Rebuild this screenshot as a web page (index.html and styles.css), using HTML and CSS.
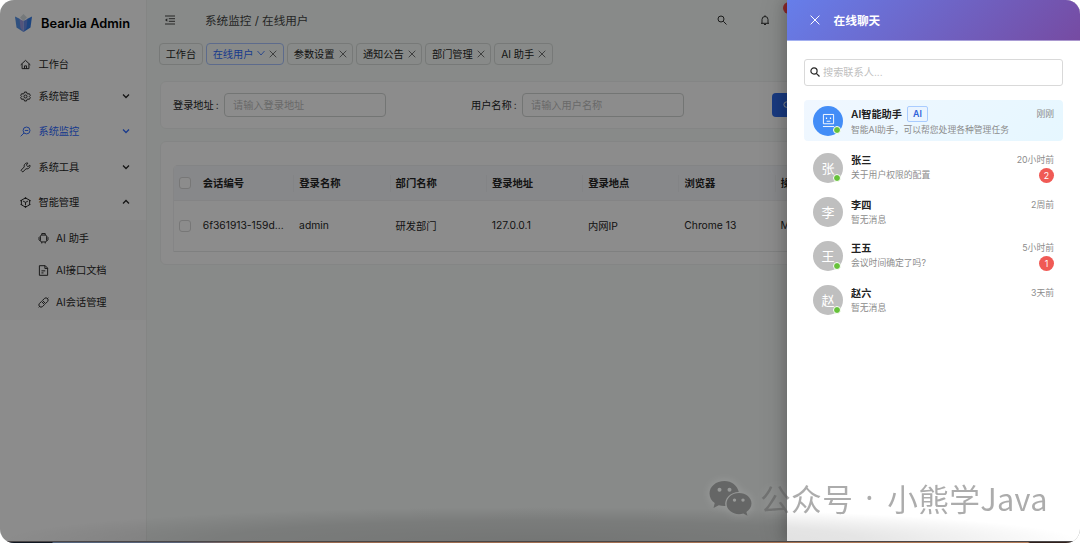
FILE: index.html
```
<!DOCTYPE html>
<html lang="zh-CN">
<head>
    <meta charset="UTF-8">
    <meta name="viewport" content="width=device-width, initial-scale=1.0">
    <title>BearJia Admin</title>
    <link rel="stylesheet" href="styles.css">
</head>
<body>

    <div class="window">
        <div class="app">
            <aside class="sidebar">
                <div class="brand">
                    <svg class="logo" viewBox="0 0 17 18">
                        <path d="M8.5 0L12 3.5 8.5 7 5 3.5z" fill="#d5dde0"/>
                        <path d="M0 2.5L5 5l3.5 13L1.5 13.500z" fill="#5693e8"/>
                        <path d="M17 2.500L12 5 8.500 18l7-4.500z" fill="#347ce8"/>
                        <path d="M4.500 5L8.500 7v11L5.500 14z" fill="#9a9ae0"/>
                        <path d="M12.500 5L8.500 7v11l3-4z" fill="#678be8"/>
                    </svg>
                    <span>BearJia Admin</span>
                </div>

                <div class="menu">
                    <div class="item first">
                        <svg class="icon" viewBox="0 0 16 16"><path d="M1 8.500L8 2l7 6.500M3 7v7h10V7M6.500 14v-4h3v4"/></svg>
                        <span>工作台</span>
                    </div>
                    <div class="item">
                        <svg class="icon" viewBox="0 0 16 16"><path d="M6.500 1.500h3l.5 2 1.500.9 2-.6 1.500 2.600L13.500 8l1.500 1.600-1.500 2.600-2-.6-1.500.9-.5 2h-3l-.5-2-1.500-.9-2 .6L1 9.600 2.500 8 1 6.400l1.500-2.600 2 .6L6 3.500z"/><circle cx="8" cy="8" r="2.200"/></svg>
                        <span>系统管理</span>
                        <svg class="arrow" viewBox="0 0 8 8"><path d="M1 2.500l3 3 3-3"/></svg>
                    </div>
                    <div class="item active">
                        <svg class="icon" viewBox="0 0 16 16"><circle cx="9.500" cy="6.500" r="5"/><path d="M5.800 10.200L1 15M7 6.500h5"/></svg>
                        <span>系统监控</span>
                        <svg class="arrow" viewBox="0 0 8 8"><path d="M1 2.500l3 3 3-3"/></svg>
                    </div>
                    <div class="item">
                        <svg class="icon" viewBox="0 0 16 16"><path d="M14.300 4.500l-2.800 2.300-2.300-2.300 2.300-2.800C8.500.6 5.300 3.500 6.200 7.200L1.500 12l2.500 2.500 4.800-4.700C12.500 10.700 15.400 7.500 14.300 4.500z"/></svg>
                        <span>系统工具</span>
                        <svg class="arrow" viewBox="0 0 8 8"><path d="M1 2.500l3 3 3-3"/></svg>
                    </div>
                    <div class="item">
                        <svg class="icon" viewBox="0 0 16 16"><path d="M8 1.500l6 3v7l-6 3-6-3v-7zM4.500 6L8 7.800 11.500 6M8 7.800V12"/><path d="M7 1.500h2M1.800 4.500v1.500M14.200 4.500V6M2 10.500v1.200M14 10.500v1.200M7 14.500h2" stroke-width="2.500"/></svg>
                        <span>智能管理</span>
                        <svg class="arrow" viewBox="0 0 8 8"><path d="M1 5.500l3-3 3 3"/></svg>
                    </div>
                </div>

                <div class="submenu">
                    <div class="item">
                        <svg class="icon" viewBox="0 0 16 16"><rect x="3.500" y="3" width="9" height="10" rx="2"/><path d="M5.500 3V.8h5V3M5.500 13v2.200M10.500 13v2.200M3 5L1.500 6.500v3.500L3 11.500M13 5l1.500 1.500V10L13 11.500"/></svg>
                        <span>AI 助手</span>
                    </div>
                    <div class="item">
                        <svg class="icon" viewBox="0 0 16 16"><path d="M2 1h8.500L14 4.500V15H2zM10 1v4h4M5 11.500h3M5 8.500h5.500"/></svg>
                        <span>AI接口文档</span>
                    </div>
                    <div class="item">
                        <svg class="icon" viewBox="0 0 16 16"><path d="M6.500 5l3-3a3.200 3.200 0 0 1 4.500 4.500l-3 3zM9.500 11l-3 3A3.200 3.200 0 0 1 2 9.500l3-3zM13.500 2.500L15 1M2.500 13.500L1 15"/></svg>
                        <span>AI会话管理</span>
                    </div>
                </div>
            </aside>

            <main class="main">
                <header class="topbar">
                    <svg class="fold" viewBox="0 0 10 10"><path d="M0 1h10M3.800 3.700H10M3.800 6.300H10M0 9h10"/><path d="M2.300 3.200v3.600L0 5z" class="solid"/></svg>
                    <span class="crumb">系统监控 / 在线用户</span>
                    <svg class="top-icon search" viewBox="0 0 10 10"><circle cx="4" cy="4" r="3"/><path d="M6.300 6.300L9.500 9.500"/></svg>
                    <svg class="top-icon bell" viewBox="0 0 10 10"><path d="M1 8.300h8M2 8.300V4.500a3 3 0 0 1 6 0v3.800M5 .3v1.200M4 9.500h2"/></svg>
                    <span class="notice"></span>
                </header>

                <nav class="tabs">
                    <span class="tab">工作台</span>
                    <span class="tab on">在线用户
                        <svg class="down" viewBox="0 0 8 8"><path d="M.5 2l3.500 4 3.500-4"/></svg>
                        <svg class="x" viewBox="0 0 8 8"><path d="M.7.7l6.600 6.600M7.300.7L.7 7.300"/></svg>
                    </span>
                    <span class="tab">参数设置<svg class="x" viewBox="0 0 8 8"><path d="M.7.7l6.600 6.600M7.300.7L.7 7.300"/></svg></span>
                    <span class="tab">通知公告<svg class="x" viewBox="0 0 8 8"><path d="M.7.7l6.600 6.600M7.300.7L.7 7.300"/></svg></span>
                    <span class="tab">部门管理<svg class="x" viewBox="0 0 8 8"><path d="M.7.7l6.600 6.600M7.300.7L.7 7.300"/></svg></span>
                    <span class="tab">AI 助手<svg class="x" viewBox="0 0 8 8"><path d="M.7.7l6.600 6.600M7.300.7L.7 7.300"/></svg></span>
                </nav>

                <form class="card filter">
                    <div class="field">
                        <label for="addr">登录地址<i>:</i></label>
                        <input type="text" id="addr" placeholder="请输入登录地址">
                    </div>
                    <div class="field">
                        <label for="user">用户名称<i>:</i></label>
                        <input type="text" id="user" placeholder="请输入用户名称">
                    </div>
                    <button type="button" class="query">
                        <svg viewBox="0 0 10 10"><circle cx="4" cy="4" r="3"/><path d="M6.300 6.300L9.500 9.500"/></svg>
                        查询
                    </button>
                </form>

                <section class="card list">
                    <div class="table">
                        <div class="row head">
                            <span class="check"><i></i></span>
                            <span>会话编号</span>
                            <span>登录名称</span>
                            <span>部门名称</span>
                            <span>登录地址</span>
                            <span>登录地点</span>
                            <span>浏览器</span>
                            <span>操作系统</span>
                        </div>
                        <div class="row">
                            <span class="check"><i></i></span>
                            <span>6f361913-159d...</span>
                            <span>admin</span>
                            <span>研发部门</span>
                            <span>127.0.0.1</span>
                            <span>内网IP</span>
                            <span>Chrome 13</span>
                            <span>Mac OS X</span>
                        </div>
                    </div>
                </section>
            </main>
        </div>

        <div class="mask"></div>

        <div class="drawer">
            <div class="drawer-head">
                <svg viewBox="0 0 10 10"><path d="M.6.6l8.800 8.800M9.400.6L.6 9.400"/></svg>
                <span>在线聊天</span>
            </div>
            <div class="drawer-body">
                <div class="search-box">
                    <svg viewBox="0 0 10 10"><circle cx="4" cy="4" r="3.100"/><path d="M6.300 6.300L9.500 9.500"/></svg>
                    <input type="text" placeholder="搜索联系人...">
                </div>

                <div class="contact ai">
                    <div class="avatar">
                        <svg viewBox="0 0 14 16"><path d="M1.500 1.500h11v10h-11zM1 14.500h12M5 8.800h4"/><path d="M4.200 5.500h1.300M8.500 5.500h1.300" stroke-width="1.600"/></svg>
                        <i class="online"></i>
                    </div>
                    <div class="info">
                        <div class="line"><b>AI智能助手</b><span class="tag">AI</span><time>刚刚</time></div>
                        <div class="line"><p>智能AI助手，可以帮您处理各种管理任务</p></div>
                    </div>
                </div>
                <div class="contact unread">
                    <div class="avatar"><span>张</span><i class="online"></i></div>
                    <div class="info">
                        <div class="line"><b>张三</b><time>20小时前</time></div>
                        <div class="line"><p>关于用户权限的配置</p><span class="badge">2</span></div>
                    </div>
                </div>
                <div class="contact">
                    <div class="avatar"><span>李</span></div>
                    <div class="info">
                        <div class="line"><b>李四</b><time>2周前</time></div>
                        <div class="line"><p>暂无消息</p></div>
                    </div>
                </div>
                <div class="contact unread">
                    <div class="avatar"><span>王</span><i class="online"></i></div>
                    <div class="info">
                        <div class="line"><b>王五</b><time>5小时前</time></div>
                        <div class="line"><p>会议时间确定了吗?</p><span class="badge">1</span></div>
                    </div>
                </div>
                <div class="contact">
                    <div class="avatar"><span>赵</span><i class="online"></i></div>
                    <div class="info">
                        <div class="line"><b>赵六</b><time>3天前</time></div>
                        <div class="line"><p>暂无消息</p></div>
                    </div>
                </div>
            </div>
        </div>

        <div class="bottom-shade"></div>
        <div class="bottom-edge"></div>

        <div class="watermark">
            <svg viewBox="0 0 43 36">
                <path fill-rule="evenodd" d="M15.500 1C7 1 .5 6.500.5 13.500c0 4 2 7.300 5.200 9.500L4.500 28l5.300-2.800c2 .6 4 .9 6.600.8-1.400-7.500 5.100-14 13.400-14C28.500 5.500 22.500 1 15.500 1zM10.500 7.800a2 2 0 1 1 0 4 2 2 0 0 1 0-4zM20.500 7.800a2 2 0 1 1 0 4 2 2 0 0 1 0-4z"/>
                <path fill-rule="evenodd" d="M30 13c-7 0-12.500 4.700-12.500 10.600S23 34.200 30 34.200c1.500 0 3-.2 4.300-.6l4.200 2.200-1.100-3.700c3-2 5.100-5 5.100-8.500C42.500 17.700 37 13 30 13zM25.500 18.400a1.700 1.700 0 1 1 0 3.400 1.700 1.700 0 0 1 0-3.400zM34 18.400a1.700 1.700 0 1 1 0 3.400 1.700 1.700 0 0 1 0-3.400z"/>
            </svg>
            <span class="wm-label">公众号</span>
            <span class="wm-dot">·</span>
            <span class="wm-name">小熊学Java</span>
        </div>
    </div>

</body>
</html>
```
FILE: styles.css
```
* {
    box-sizing: border-box;
}

body {
    margin: 0;
    background: #fff;
    font-family: Inter, "Noto Sans CJK SC", sans-serif;
    font-size: 10.2px;
    color: #262626;
}

svg {
    fill: none;
    stroke: currentColor;
    flex: none;
}

i {
    font-style: normal;
}

.window {
    position: relative;
    width: 1080px;
    height: 543px;
    border-radius: 14px;
    overflow: hidden;
}

.app {
    display: flex;
    height: 543px;
    background: #f7fcf9;
}

/* sidebar */
.sidebar {
    width: 147px;
    flex: none;
    background: #fff;
    border-right: 1px solid #f0f2f1;
}

.brand {
    display: flex;
    align-items: center;
    gap: 9px;
    height: 46px;
    padding-left: 15px;
    font-size: 12.8px;
    font-weight: 600;
    color: #000;
}

.logo {
    width: 17px;
    height: 18px;
    stroke: none;
}

.item {
    display: flex;
    align-items: center;
    height: 35.3px;
    padding: 0 16px 0 20px;
}

.item span {
    padding-bottom: 2px;
}

.item.first {
    height: 30px;
    margin-top: 3px;
}

.icon {
    width: 11px;
    height: 11px;
    margin-right: 7.5px;
    stroke-width: 1.4;
}

.arrow {
    width: 8px;
    height: 8px;
    margin: -1px 0 0 auto;
    stroke-width: 1.3;
}

.item.active {
    color: #2f6bff;
}

.submenu {
    height: 100px;
    padding-top: 2px;
    background: #fafafa;
}

.submenu .item {
    height: 32.3px;
    padding-left: 38px;
}

.submenu .icon {
    margin-right: 7px;
}

/* content */
.main {
    flex: 1;
    min-width: 0;
    overflow: hidden;
}

.topbar {
    display: flex;
    align-items: center;
    height: 40px;
    padding-left: 18px;
    color: #444;
}

.fold {
    width: 10px;
    height: 10px;
}

.fold .solid {
    fill: currentColor;
    stroke: none;
}

.crumb {
    width: 481px;
    margin-left: 30px;
    padding-bottom: 1px;
    font-size: 11.6px;
}

.top-icon {
    width: 10px;
    height: 10px;
    margin-left: 31px;
    color: #333;
}

.top-icon.bell {
    margin-left: 33px;
}

.notice {
    width: 12px;
    height: 12px;
    margin: -24px 0 0 13px;
    border-radius: 50%;
    background: #ff4d4f;
}

.tabs {
    display: flex;
    gap: 3px;
    padding: 3px 0 0 12px;
}

.tab {
    display: flex;
    align-items: center;
    height: 22px;
    padding: 0 5.7px 2px;
    border: 1px solid #d9dddb;
    border-radius: 4px;
    white-space: nowrap;
}

.tab.on {
    color: #2f6bff;
    border-color: #aac4ff;
}

.tab .x {
    width: 8px;
    height: 8px;
    margin: 1px 0 0 4px;
    color: #666;
    stroke-width: 0.9;
}

.tab .down {
    width: 8px;
    height: 8px;
    margin-left: 4px;
    stroke-width: 0.8;
}

.card {
    width: 930px;
    margin-left: 13px;
    background: #fff;
    border: 1px solid #f1f3f2;
    border-radius: 6px;
}

.filter {
    display: flex;
    align-items: center;
    height: 48px;
    margin-top: 16px;
    padding-left: 12px;
}

.field {
    display: flex;
    align-items: center;
    width: 298px;
}

.field label {
    width: 51px;
    padding-bottom: 2px;
}

.field label i {
    margin-left: 2px;
}

.field input {
    width: 162px;
    height: 24px;
    padding: 0 8px;
    border: 1px solid #d2d5d3;
    border-radius: 4px;
    background: #fff;
    font: inherit;
}

input::placeholder {
    color: #bfbfbf;
    opacity: 1;
}

.query {
    display: flex;
    align-items: center;
    gap: 6px;
    height: 24px;
    margin-left: 3px;
    padding: 0 11px;
    border: 0;
    border-radius: 4px;
    background: #2f6bea;
    color: #fff;
    font: inherit;
}

.query svg {
    width: 9px;
    height: 9px;
}

.list {
    height: 124px;
    margin-top: 12px;
    padding: 23px 0 0 12px;
}

.table {
    width: 900px;
    overflow: hidden;
    border-left: 1px solid #f2f3f4;
    border-radius: 5px 0 0 0;
}

.row {
    display: grid;
    grid-template-columns: 23px repeat(9, 96.3px);
    align-items: center;
    height: 51px;
    border-bottom: 1px solid #e8e9ea;
}

.row span {
    padding: 0 0 2px 5.8px;
    font-size: 10.3px;
    white-space: nowrap;
}

.row .check {
    padding: 0 0 0 5px;
}

.check i {
    display: block;
    width: 12px;
    height: 12px;
    border: 1px solid #d9d9d9;
    border-radius: 3px;
    background: #fff;
}

.row.head {
    height: 36px;
    background: #f6f8fb;
    border-top: 1px solid #eff0f2;
    border-bottom-color: #f0f1f3;
    font-weight: 600;
}

.head span + span + span {
    border-left: 1px solid #eff1f4;
    padding-left: 5px;
}

.mask {
    position: absolute;
    inset: 0;
    background: rgba(0, 0, 0, 0.45);
}

/* chat drawer */
.drawer {
    position: absolute;
    top: 0;
    right: 0;
    bottom: 0;
    width: 293.5px;
    background: #fff;
    box-shadow: -4px 0 10px rgba(0, 0, 0, 0.14), -6px 0 24px rgba(0, 0, 0, 0.1);
}

.drawer-head {
    display: flex;
    align-items: center;
    gap: 14px;
    height: 41px;
    padding-left: 23px;
    border-bottom: 1px solid rgba(255, 255, 255, 0.4);
    background: linear-gradient(135deg, #667eea 0%, #764ba2 100%);
    color: #fff;
    font-size: 11.7px;
    font-weight: 700;
}

.drawer-head svg {
    width: 10px;
    height: 10px;
}

.drawer-head span {
    padding-bottom: 2px;
}

.drawer-body {
    padding: 18px 17px 0 17.5px;
}

.search-box {
    display: flex;
    align-items: center;
    height: 27px;
    margin-bottom: 14px;
    padding: 0 0 1px 5px;
    border: 1px solid #d9d9d9;
    border-radius: 3px;
}

.search-box svg {
    width: 10px;
    height: 10px;
    margin-right: 3px;
    stroke-width: 1.2;
}

.search-box input {
    flex: 1;
    min-width: 0;
    padding: 0;
    border: 0;
    background: none;
    font: inherit;
}

.contact {
    display: flex;
    align-items: center;
    gap: 8px;
    height: 44px;
    padding: 0 9px;
}

.contact.ai {
    height: 41px;
    margin-bottom: 5px;
    border-radius: 4px;
    background: linear-gradient(135deg, #f0f7ff, #e6f7ff);
}

.avatar {
    position: relative;
    display: flex;
    align-items: center;
    justify-content: center;
    width: 30px;
    height: 30px;
    border-radius: 50%;
    background: #bfbfbf;
    color: #fff;
    font-size: 13px;
}

.avatar span {
    padding-bottom: 2px;
}

.ai .avatar {
    background: #438df7;
}

.avatar svg {
    width: 13px;
    height: 15px;
}

.online {
    position: absolute;
    right: 2px;
    bottom: 1.5px;
    width: 8px;
    height: 8px;
    border: 1.5px solid #fff;
    border-radius: 50%;
    background: #67c23a;
}

.info {
    flex: 1;
}

.ai .info {
    padding-top: 2px;
}

.line {
    display: flex;
    align-items: center;
    min-height: 14px;
    line-height: 14px;
}

.unread .line:first-child {
    margin-top: -1px;
    padding-bottom: 1px;
}

.line b {
    font-weight: 600;
    color: #222;
}

.line time {
    margin-left: auto;
    font-size: 8.8px;
    color: #8c8c8c;
}

.line p {
    margin: 0;
    padding-top: 1px;
    font-size: 8.8px;
    color: #8c8c8c;
}

.unread .line p {
    padding-top: 0;
}

.tag {
    height: 16px;
    margin-left: 5px;
    padding: 0 5px;
    border: 1px solid #a9ccff;
    border-radius: 2px;
    background: #eaf4ff;
    color: #2f62d9;
    font-size: 8.8px;
    font-weight: 600;
}

.badge {
    width: 15px;
    height: 15px;
    margin-left: auto;
    border-radius: 50%;
    background: #f05a55;
    color: #fff;
    font-size: 8.8px;
    line-height: 15px;
    text-align: center;
}

.bottom-shade {
    position: absolute;
    left: 0;
    right: 0;
    bottom: 2px;
    height: 34px;
    background: radial-gradient(50% 100% at 50% 100%, rgba(0, 0, 0, 0.15), rgba(0, 0, 0, 0.1) 60%, transparent);
}

.bottom-edge {
    position: absolute;
    left: 0;
    right: 0;
    bottom: 0;
    height: 2px;
    border-top: 1px solid #4b4748;
    background: linear-gradient(90deg, #101722 52px, #52647e 53px, #5a647a 180px, #99694f 270px, #b17a56 1028px, #31211c 1030px);
}

.watermark {
    position: absolute;
    left: 709px;
    top: 478px;
    display: flex;
    align-items: center;
    height: 38px;
    font-family: "Noto Sans CJK SC", sans-serif;
    font-size: 30.7px;
    white-space: nowrap;
    color: #5c5c5c;
    opacity: 0.5;
}

.watermark svg {
    width: 43px;
    height: 36px;
    margin-top: 2px;
    fill: #444;
    stroke: none;
}

.watermark svg,
.watermark span {
    filter: drop-shadow(0 0 5px rgba(255, 255, 255, 0.35));
}

.wm-label {
    margin-left: 8px;
    letter-spacing: 0.4px;
}

.wm-dot {
    width: 34px;
    padding-right: 2px;
    font-family: "Noto Sans", sans-serif;
    text-align: center;
}

.wm-name {
    letter-spacing: 0.3px;
}
```
